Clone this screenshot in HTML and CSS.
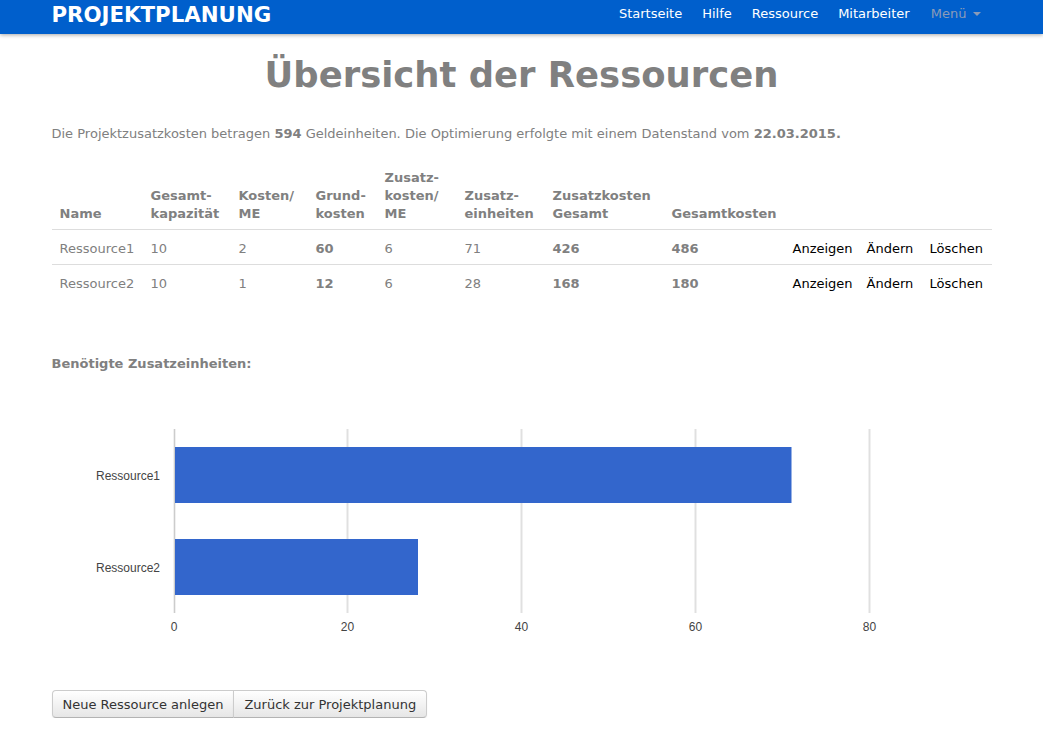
FILE: index.html
```html
<!DOCTYPE html>
<html lang="de">
<head>
<meta charset="utf-8">
<title>Projektplanung</title>
<link rel="stylesheet" href="styles.css">
</head>
<body>
<div class="navbar">
  <div class="container nav-inner">
    <a class="brand" href="#">PROJEKTPLANUNG</a>
    <ul class="nav">
      <li><a href="#">Startseite</a></li>
      <li><a href="#">Hilfe</a></li>
      <li><a href="#">Ressource</a></li>
      <li><a href="#">Mitarbeiter</a></li>
      <li><a class="muted" href="#">Menü <span class="caret"></span></a></li>
    </ul>
  </div>
</div>
<div class="container main">
  <h1 class="title">Übersicht der Ressourcen</h1>
  <p class="summary">Die Projektzusatzkosten betragen <b>594</b> Geldeinheiten. Die Optimierung erfolgte mit einem Datenstand vom <b>22.03.2015.</b></p>
  <table class="table">
    <colgroup>
      <col class="c1"><col class="c2"><col class="c3"><col class="c4"><col class="c5"><col class="c6"><col class="c7"><col class="c8"><col class="c9"><col class="c10"><col class="c11">
    </colgroup>
    <thead>
      <tr>
        <th>Name</th>
        <th>Gesamt-<br>kapazität</th>
        <th>Kosten/<br>ME</th>
        <th>Grund-<br>kosten</th>
        <th>Zusatz-<br>kosten/<br>ME</th>
        <th>Zusatz-<br>einheiten</th>
        <th>Zusatzkosten<br>Gesamt</th>
        <th>Gesamtkosten</th>
        <th></th><th></th><th></th>
      </tr>
    </thead>
    <tbody>
      <tr>
        <td>Ressource1</td><td>10</td><td>2</td><td><b>60</b></td><td>6</td><td>71</td><td><b>426</b></td><td><b>486</b></td>
        <td><a href="#">Anzeigen</a></td><td><a href="#">Ändern</a></td><td><a href="#">Löschen</a></td>
      </tr>
      <tr>
        <td>Ressource2</td><td>10</td><td>1</td><td><b>12</b></td><td>6</td><td>28</td><td><b>168</b></td><td><b>180</b></td>
        <td><a href="#">Anzeigen</a></td><td><a href="#">Ändern</a></td><td><a href="#">Löschen</a></td>
      </tr>
    </tbody>
  </table>
  <h4 class="subhead">Benötigte Zusatzeinheiten:</h4>
  <div class="chart">
    <svg width="940" height="240" viewBox="0 0 940 240" xmlns="http://www.w3.org/2000/svg">
      <g stroke="#e0e0e0" stroke-width="2">
        <line x1="122.5" y1="19" x2="122.5" y2="203"/>
        <line x1="295.5" y1="19" x2="295.5" y2="203"/>
        <line x1="469.5" y1="19" x2="469.5" y2="203"/>
        <line x1="643.5" y1="19" x2="643.5" y2="203"/>
        <line x1="817.5" y1="19" x2="817.5" y2="203"/>
      </g>
      <line x1="122.5" y1="19" x2="122.5" y2="203" stroke="#cccccc" stroke-width="1"/>
      <rect x="123" y="37" width="616.5" height="56" fill="#3366cc"/>
      <rect x="123" y="129" width="243" height="56" fill="#3366cc"/>
      <g class="axis" font-family="Liberation Sans, Arial, sans-serif" font-size="12" fill="#444444">
        <text x="108" y="70" text-anchor="end">Ressource1</text>
        <text x="108" y="162" text-anchor="end">Ressource2</text>
        <text x="122" y="221" text-anchor="middle">0</text>
        <text x="295.5" y="221" text-anchor="middle">20</text>
        <text x="469.5" y="221" text-anchor="middle">40</text>
        <text x="643.5" y="221" text-anchor="middle">60</text>
        <text x="817.5" y="221" text-anchor="middle">80</text>
      </g>
    </svg>
  </div>
  <div class="btn-group">
    <a class="btn" href="#">Neue Ressource anlegen</a><a class="btn" href="#">Zurück zur Projektplanung</a>
  </div>
</div>
</body>
</html>
```
FILE: styles.css
```css
html, body {
  margin: 0;
  padding: 0;
}
body {
  font-family: "DejaVu Sans", Verdana, sans-serif;
  font-size: 13px;
  line-height: 18px;
  color: #808080;
  background: #ffffff;
}
a {
  text-decoration: none;
}
.container {
  width: 940px;
  margin: 0 auto;
}
.navbar {
  background: #005fcc;
  height: 34px;
  box-shadow: 0 1px 4px rgba(0, 0, 0, 0.35);
  position: relative;
}
.nav-inner {
  display: flex;
  justify-content: space-between;
  align-items: flex-start;
  height: 34px;
}
.brand {
  color: #ffffff;
  font-weight: bold;
  font-size: 21.3px;
  line-height: 30px;
}
.nav {
  list-style: none;
  margin: 0;
  padding: 0;
  display: flex;
}
.nav li a {
  display: block;
  color: #ffffff;
  padding: 5px 10px 4px;
  line-height: 18px;
}
.nav li:first-child a {
  padding-left: 11px;
}
.nav li:last-child a {
  padding-left: 11px;
  padding-right: 11px;
}
.nav a.muted {
  color: #8a9bb8;
}
.caret {
  display: inline-block;
  width: 0;
  height: 0;
  border-left: 4px solid transparent;
  border-right: 4px solid transparent;
  border-top: 4px solid #8a9bb8;
  vertical-align: middle;
  margin-left: 2px;
  margin-top: -2px;
}
.main {
  padding-top: 18px;
}
.title {
  margin: 0;
  text-align: center;
  font-size: 35.4px;
  line-height: 46px;
  font-weight: bold;
  color: #808080;
}
.summary {
  margin: 27px 0 0 0;
}
.table {
  width: 940px;
  border-collapse: collapse;
  margin-top: 18px;
  table-layout: fixed;
}
.table th,
.table td {
  padding: 8px;
  text-align: left;
  line-height: 18px;
  white-space: nowrap;
}
.table th {
  vertical-align: bottom;
  font-weight: bold;
  padding-bottom: 6px;
}
.table tbody td {
  border-top: 1px solid #dddddd;
  vertical-align: top;
  padding-top: 10px;
  padding-bottom: 6px;
}
.table td a {
  color: #000000;
}
.c1 { width: 91px; }
.c2 { width: 88px; }
.c3 { width: 77px; }
.c4 { width: 69px; }
.c5 { width: 80px; }
.c6 { width: 88px; }
.c7 { width: 119px; }
.c8 { width: 121px; }
.c9 { width: 74px; }
.c10 { width: 63px; }
.c11 { width: 70px; }
.subhead {
  margin: 56px 0 0 0;
  font-size: 13px;
  line-height: 18px;
  font-weight: bold;
}
.chart {
  margin-top: 37px;
  height: 240px;
}
.chart svg {
  display: block;
}
.btn-group {
  margin-top: 40px;
  display: inline-flex;
}
.btn {
  display: inline-block;
  padding: 4px 10px;
  font-size: 13px;
  line-height: 17px;
  height: 17px;
  padding-top: 5px;
  color: #333333;
  border: 1px solid #cccccc;
  border-bottom-color: #b3b3b3;
  background: linear-gradient(#ffffff, #e6e6e6);
  box-shadow: inset 0 1px 0 rgba(255,255,255,.2), 0 1px 2px rgba(0,0,0,.05);
}
.btn:first-child {
  border-radius: 4px 0 0 4px;
}
.btn + .btn {
  margin-left: -1px;
  border-radius: 0 4px 4px 0;
}
```
